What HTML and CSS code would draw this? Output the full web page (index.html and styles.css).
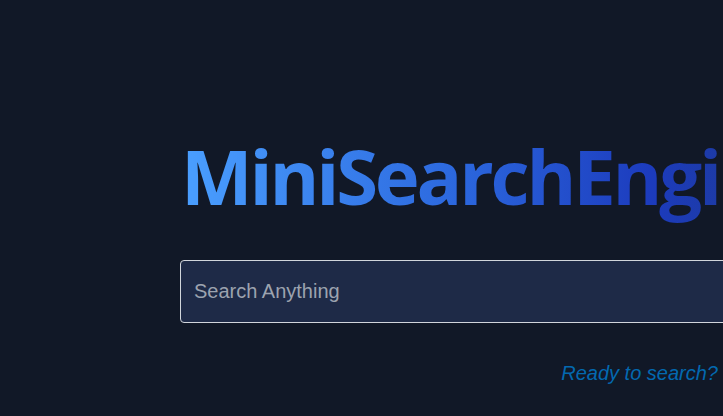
FILE: index.html
```html
<!DOCTYPE html>
<html lang="en">
<head>
<meta charset="utf-8">
<title>MiniSearchEngine</title>
<link rel="stylesheet" href="styles.css">
</head>
<body>
<main class="page">
  <section class="hero">
    <h1 class="title">MiniSearchEngine</h1>
    <div class="search">
      <input class="search-input" type="text" placeholder="Search Anything">
    </div>
    <p class="status">Ready to search?</p>
  </section>
</main>
</body>
</html>
```
FILE: styles.css
```css
html, body {
  margin: 0;
  padding: 0;
  background: #111827;
  overflow: hidden;
}
.page {
  width: 723px;
  height: 416px;
  overflow: hidden;
}
.hero {
  width: 760px;
  margin-left: 180px;
  padding-top: 128px;
  display: flex;
  flex-direction: column;
}
.title {
  margin: 0 0 0 1px;
  font-family: "Open Sans", "Noto Sans", sans-serif;
  font-weight: 700;
  font-size: 76px;
  line-height: 96px;
  letter-spacing: -3.2px;
  white-space: nowrap;
  background: linear-gradient(90deg, #4a9fff 0%, #2b66dd 45%, #1c3bbd 75%, #1e3a8a 100%);
  -webkit-background-clip: text;
  background-clip: text;
  color: transparent;
  width: max-content;
}
.search {
  margin-top: 36px;
}
.search-input {
  box-sizing: border-box;
  width: 740px;
  height: 63px;
  background: #1e2a47;
  border: 1px solid #d1d5db;
  border-radius: 4px;
  padding: 0 13px;
  font-family: "Liberation Sans", Arial, sans-serif;
  font-size: 20px;
  color: #e5e7eb;
  outline: none;
}
.search-input::placeholder {
  color: #9ca3af;
}
.status {
  margin: 39px 0 0 0;
  width: 538px;
  text-align: right;
  font-family: "Liberation Sans", Arial, sans-serif;
  font-style: italic;
  font-size: 20px;
  color: #0369b0;
}
```
